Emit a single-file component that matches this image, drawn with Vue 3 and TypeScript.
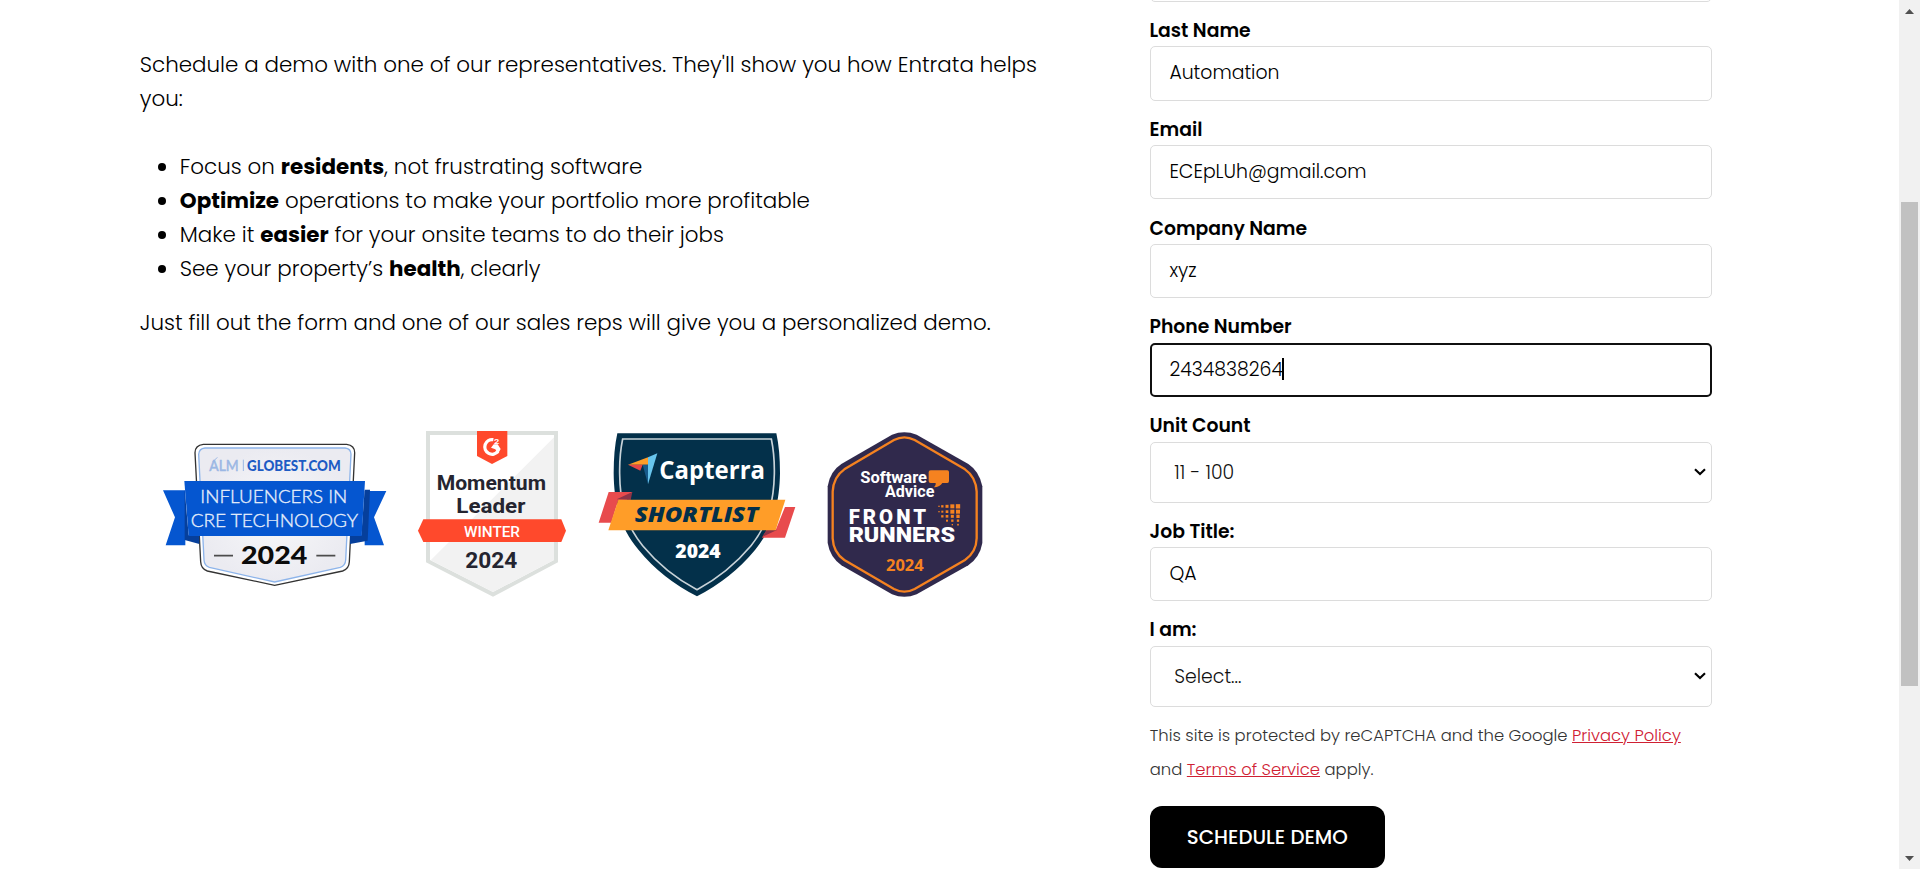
<script setup lang="ts">
interface Field {
  label: string
  value: string
  kind: 'input' | 'select'
  focused?: boolean
}

interface Dot {
  x: number
  y: number
  s: number
}

const fields: Field[] = [
  { label: 'Last Name', value: 'Automation', kind: 'input' },
  { label: 'Email', value: 'ECEpLUh@gmail.com', kind: 'input' },
  { label: 'Company Name', value: 'xyz', kind: 'input' },
  { label: 'Phone Number', value: '2434838264', kind: 'input', focused: true },
  { label: 'Unit Count', value: '11 - 100', kind: 'select' },
  { label: 'Job Title:', value: 'QA', kind: 'input' },
  { label: 'I am:', value: 'Select...', kind: 'select' },
]

const dots: Dot[] = [
  { x: 387, y: 259, s: 4 }, { x: 397, y: 259, s: 7 }, { x: 411, y: 259, s: 9 }, { x: 427, y: 259, s: 12 }, { x: 444, y: 259, s: 13 },
  { x: 387, y: 275, s: 4 }, { x: 397, y: 275, s: 6 }, { x: 411, y: 275, s: 8 }, { x: 427, y: 275, s: 12 }, { x: 444, y: 275, s: 12 },
  { x: 397, y: 289, s: 7 }, { x: 411, y: 289, s: 8 }, { x: 427, y: 289, s: 9 }, { x: 444, y: 289, s: 10 },
  { x: 411, y: 302, s: 6 }, { x: 427, y: 302, s: 7 }, { x: 444, y: 302, s: 7 },
  { x: 427, y: 314, s: 4 }, { x: 444, y: 314, s: 5 },
]
</script>

<template>
  <div class="page">
    <main class="content">
      <section class="intro">
        <p class="lead">Schedule a demo with one of our representatives. They'll show you how Entrata helps you:</p>
        <ul class="benefits">
          <li>Focus on <strong>residents</strong>, not frustrating software</li>
          <li><strong>Optimize</strong> operations to make your portfolio more profitable</li>
          <li>Make it <strong>easier</strong> for your onsite teams to do their jobs</li>
          <li>See your property’s <strong>health</strong>, clearly</li>
        </ul>
        <p class="closing">Just fill out the form and one of our sales reps will give you a personalized demo.</p>

        <div class="badges">
          <svg class="badge" width="250" height="180" viewBox="0 0 750 540">
            <defs>
              <radialGradient id="plate"><stop offset="0" stop-color="#f8f8fa" /><stop offset="1" stop-color="#ebebf1" /></radialGradient>
            </defs>
            <path d="M160 73H590Q614 76 614 98L598 425Q597 446 578 453L374 496L172 453Q153 446 152 425L135 98Q135 76 160 73Z" fill="#fff" stroke="#333" stroke-width="4" />
            <path d="M165 84H585Q603 86 603 103L587 420Q586 437 571 442L374 486L178 442Q163 437 162 420L146 103Q147 86 165 84Z" fill="url(#plate)" stroke="#8db4ea" stroke-width="4" />
            <path d="M39 211H106V376H47L75 292ZM709 213H644V376H702L672 292Z" fill="#0556d0" />
            <path d="M104 208V360L148 372V346H116ZM644 209H660L653 362L600 372V346H634Z" fill="#063f9b" />
            <path d="M103 183H645L635 348H116Z" fill="#0556d0" />
            <text x="178" y="153" class="lato" font-size="43" font-weight="400" fill="#9bb7e4" stroke="#9bb7e4" stroke-width="1.5" textLength="88" lengthAdjust="spacingAndGlyphs">ALM</text>
            <path d="M188 126L202 112M280 119V153" stroke="#9bb7e4" stroke-width="3" />
            <text x="291" y="152" class="lato" font-size="43" font-weight="900" fill="#1d5bc4" textLength="281" lengthAdjust="spacingAndGlyphs">GLOBEST.COM</text>
            <text x="151" y="250" class="lato" font-size="53" fill="#e6eefb" stroke="#e6eefb" stroke-width="1" textLength="441" lengthAdjust="spacingAndGlyphs">INFLUENCERS IN</text>
            <text x="122" y="320" class="lato" font-size="53" fill="#e6eefb" stroke="#e6eefb" stroke-width="1" textLength="502" lengthAdjust="spacingAndGlyphs">CRE TECHNOLOGY</text>
            <text x="273" y="433" class="lato" font-size="75" font-weight="900" fill="#0b0b0b" textLength="199" lengthAdjust="spacingAndGlyphs">2024</text>
            <path d="M192 407H249M499 407H556" stroke="#4c4c4c" stroke-width="5" />
          </svg>

          <svg class="badge" width="190" height="180" viewBox="0 0 570 540">
            <path d="M78 33H474V427L279 530L78 427Z" fill="#dce0dd" />
            <path d="M90 45H462V420L279 516L90 420Z" fill="#fff" />
            <path d="M462 52V420L279 516L92 421Z" fill="#f2f2f2" />
            <path d="M231 33H322V108L276 132L231 108Z" fill="#ff492c" />
            <path d="M280 59A22 22 0 1 0 294 94" fill="none" stroke="#fff" stroke-width="10" />
            <path d="M273 83L281 73H293L302 87L294 101L286 88Z" fill="#fff" />
            <text x="282" y="71" class="roboto" font-size="24" font-weight="700" fill="#fff" textLength="16" lengthAdjust="spacingAndGlyphs">2</text>
            <text x="110" y="211" class="roboto" font-size="62" font-weight="700" fill="#252530" textLength="328" lengthAdjust="spacingAndGlyphs">Momentum</text>
            <text x="169" y="279" class="roboto" font-size="62" font-weight="700" fill="#252530" textLength="207" lengthAdjust="spacingAndGlyphs">Leader</text>
            <path d="M70 298H484L498 332L484 366H70L54 332Z" fill="#ff492c" />
            <text x="192" y="351" class="roboto" font-size="46" font-weight="500" fill="#fff" textLength="168" lengthAdjust="spacingAndGlyphs">WINTER</text>
            <text x="196" y="444" class="roboto" font-size="64" font-weight="700" fill="#252530" textLength="156" lengthAdjust="spacingAndGlyphs">2024</text>
          </svg>

          <svg class="badge" width="220" height="180" viewBox="0 0 660 540">
            <path d="M82 40H559Q570 90 570 160C568 270 540 335 495 390Q425 475 321 529Q215 475 146 390C100 335 72 270 71 160Q71 90 82 40Z" fill="#03304a" />
            <path d="M98 57H544Q554 105 553 162C551 265 525 325 483 377Q415 458 321 509Q225 458 158 377C116 325 90 265 89 162Q88 105 98 57Z" fill="none" stroke="#c8d2d8" stroke-width="5" />
            <path d="M56 216H127L110 240H85L64 308H26ZM585 261H616L585 353H516L530 330H557Z" fill="#e84b4d" />
            <path d="M80 238L127 216L122 240ZM516 351L530 330H561Z" fill="#8d3447" />
            <path d="M85 239H586L557 331H55Z" fill="#ff9d28" />
            <path d="M114 134L174 112V134Z" fill="#ff9d28" />
            <path d="M174 112L202 100L174 193Z" fill="#68c5ed" />
            <path d="M158 134H174V193Z" fill="#175a8b" />
            <path d="M114 134H158L151 152Z" fill="#e54747" />
            <text x="208" y="177" class="open" font-size="77" font-weight="700" fill="#fff" textLength="317" lengthAdjust="spacingAndGlyphs">Capterra</text>
            <text x="134" y="307" class="open" font-size="63" font-weight="800" font-style="italic" fill="#03304a" textLength="371" lengthAdjust="spacingAndGlyphs">SHORTLIST</text>
            <text x="256" y="414" class="open" font-size="60" font-weight="800" fill="#fff" textLength="136" lengthAdjust="spacingAndGlyphs">2024</text>
          </svg>

          <svg class="badge" width="190" height="180" viewBox="0 0 570 540">
            <path d="M246 44Q283 30 320 44L475 132Q508 154 517 199V369Q510 411 475 436L320 523Q283 538 246 523L94 436Q60 411 53 369V199Q60 154 94 132Z" fill="#30294c" />
            <path d="M252 60Q283 44 314 60L465 148Q498 171 500 215V355Q499 397 465 420L314 507Q283 523 252 507L103 420Q70 397 68 355V215Q70 171 103 148Z" fill="none" stroke="#f58220" stroke-width="7" />
            <text x="151" y="188" class="roboto" font-size="47" font-weight="700" fill="#fff" textLength="200" lengthAdjust="spacingAndGlyphs">Software</text>
            <text x="225" y="232" class="roboto" font-size="47" font-weight="700" fill="#fff" textLength="148" lengthAdjust="spacingAndGlyphs">Advice</text>
            <path d="M362 151H412Q417 151 417 156V183Q417 189 412 189H397Q390 201 372 202Q379 195 377 189H362Q356 189 356 183V156Q356 151 362 151Z" fill="#f58220" />
            <text x="116" y="313" class="roboto" font-size="61" font-weight="900" fill="#fff" textLength="232" lengthAdjust="spacing">FRONT</text>
            <text x="116" y="366" class="roboto" font-size="61" font-weight="900" fill="#fff" textLength="319" lengthAdjust="spacingAndGlyphs">RUNNERS</text>
            <rect v-for="(d, i) in dots" :key="i" :x="d.x - d.s / 2" :y="d.y - d.s / 2" :width="d.s" :height="d.s" fill="#f58220" />
            <text x="228" y="453" class="open" font-size="47" font-weight="700" fill="#f58220" textLength="113" lengthAdjust="spacingAndGlyphs">2024</text>
          </svg>
        </div>
      </section>

      <form class="form" @submit.prevent>
        <div class="box previous"></div>
        <div v-for="field in fields" :key="field.label" class="field">
          <label class="label">{{ field.label }}</label>
          <div class="box" :class="[field.kind, { focused: field.focused }]">
            <span class="value">{{ field.value }}</span>
            <i v-if="field.focused" class="caret"></i>
            <svg v-if="field.kind === 'select'" class="chevron" width="12" height="8" viewBox="0 0 12 8">
              <path d="M1 1.2L6 6.1L11 1.2" fill="none" stroke="#000" stroke-width="2.1" />
            </svg>
          </div>
        </div>
        <p class="terms">
          This site is protected by reCAPTCHA and the Google <a href="#">Privacy Policy</a><br />
          and <a href="#">Terms of Service</a> apply.
        </p>
        <button class="submit" type="submit">SCHEDULE DEMO</button>
      </form>
    </main>

    <div class="scrollbar">
      <svg width="21" height="21" viewBox="0 0 21 21"><path d="M6 14H15L10.5 9Z" fill="#505050" /></svg>
      <div class="thumb"></div>
      <svg class="down" width="21" height="21" viewBox="0 0 21 21"><path d="M6 8H15L10.5 13Z" fill="#505050" /></svg>
    </div>
  </div>
</template>

<style>
html,
body {
  margin: 0;
  overflow: hidden;
  background: #fff;
}
</style>

<style scoped>
.page {
  display: flex;
  height: 869px;
  overflow: hidden;
  color: #000;
  font-family: Poppins, Inter, sans-serif;
  font-weight: 300;
}
.content {
  display: flex;
  flex: 1;
  gap: 90px;
  padding-left: 139.8px;
}
.intro {
  width: 920px;
  padding-top: 48px;
  font-size: 21.43px;
  line-height: 34px;
}
.lead,
.closing {
  margin: 0;
}
.benefits {
  margin: 34px 0 20px;
  padding-left: 40px;
}
strong {
  font-weight: 700;
}
.badges {
  display: flex;
  margin: 80px 0 0 10.2px;
}
.badge {
  display: block;
  flex: none;
}
.lato {
  font-family: Lato, sans-serif;
}
.roboto {
  font-family: Roboto, sans-serif;
}
.open {
  font-family: 'Open Sans', sans-serif;
}
.form {
  width: 562px;
}
.box {
  display: flex;
  align-items: center;
  box-sizing: border-box;
  height: 54.2px;
  padding: 0 19px 2px 18.6px;
  border: 1px solid #dcdcdc;
  border-radius: 5px;
  background: #fff;
  font-size: 18.85px;
}
.previous {
  margin-top: -52.4px;
}
.label {
  display: block;
  box-sizing: border-box;
  height: 44.6px;
  margin-left: -0.3px;
  padding-top: 15.2px;
  font-size: 18.8px;
  font-weight: 600;
  line-height: 28px;
}
.value {
  white-space: pre;
}
.select {
  height: 61px;
  padding: 0 5px 0 23.5px;
}
.select .value {
  color: #111;
}
.focused {
  padding: 0 18px 1px 17.6px;
  border: 2px solid #101010;
}
.caret {
  width: 2px;
  height: 22px;
  margin: -1px 0 0 -0.6px;
  background: #000;
}
.chevron {
  margin: 0 0 0 auto;
}
.terms {
  margin: 12px 0 19px;
  color: #333;
  font-size: 16.42px;
  line-height: 34px;
  white-space: nowrap;
}
.terms a {
  color: #cf2033;
  text-decoration: underline;
}
.submit {
  display: block;
  width: 235px;
  height: 62px;
  padding: 1px 0 0;
  border: 0;
  border-radius: 12px;
  background: #000;
  color: #fff;
  font: inherit;
  font-size: 19.8px;
  font-weight: 500;
}
.scrollbar {
  display: flex;
  flex-direction: column;
  width: 21px;
  background: #f1f1f1;
}
.scrollbar svg {
  display: block;
}
.thumb {
  width: 17px;
  height: 484px;
  margin: 181px 0 0 2px;
  background: #c1c1c1;
}
.scrollbar .down {
  margin-top: auto;
}
</style>
